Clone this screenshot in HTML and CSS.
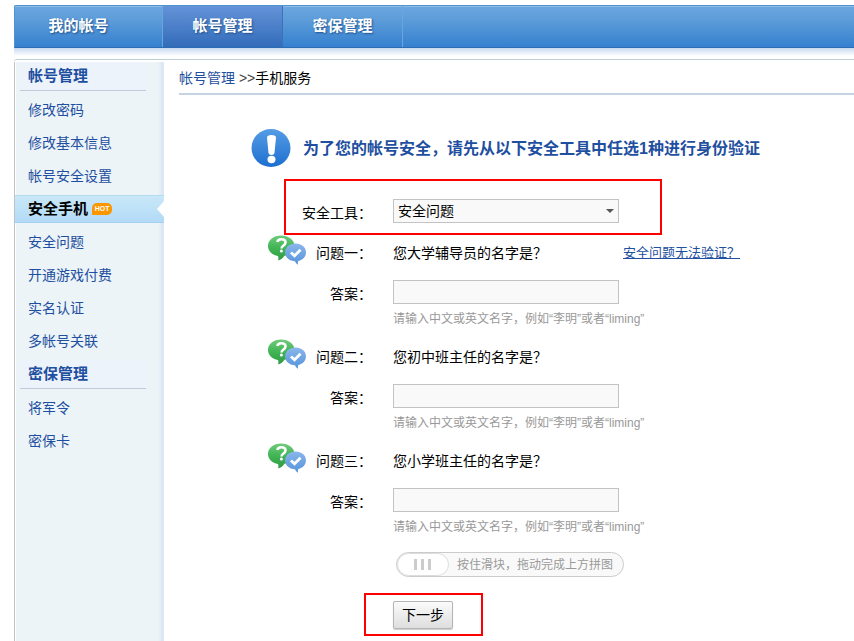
FILE: index.html
```html
<!DOCTYPE html>
<html lang="zh-CN">
<head>
    <meta charset="UTF-8">
    <meta name="viewport" content="width=device-width, initial-scale=1.0">
    <title>手机服务</title>
    <link rel="stylesheet" href="styles.css">
</head>
<body>
    <!-- Icons shared by the form -->
    <svg class="icon-defs" aria-hidden="true">
        <defs>
            <linearGradient id="green" x1="0" y1="0" x2="0" y2="1">
                <stop offset="0" stop-color="#6fcb7c"/>
                <stop offset="0.5" stop-color="#41b455"/>
                <stop offset="1" stop-color="#2f9b45"/>
            </linearGradient>
            <linearGradient id="blue" x1="0" y1="0" x2="0" y2="1">
                <stop offset="0" stop-color="#8ab6ea"/>
                <stop offset="1" stop-color="#5593dc"/>
            </linearGradient>
            <linearGradient id="notice" x1="0" y1="0" x2="0" y2="1">
                <stop offset="0" stop-color="#559ce4"/>
                <stop offset="1" stop-color="#1d6fd0"/>
            </linearGradient>
            <symbol id="icon-question" viewBox="0 0 38 30">
                <path d="M13 .500C5.500.500 0 5 0 11c0 5 4 9 10 10 .6 1.500.6 3 0 4.500 3-.6 5-2.500 6.500-4.700C22 20 26.500 16 26.500 11 26.500 5 20.500.500 13 .500z" fill="url(#green)"/>
                <path d="M9.300 7C9.800 5 11.500 4.300 13.300 4.300c2.700 0 4.200 1.400 4.200 3.300 0 2.900-4 3-4 5.800" fill="none" stroke="#fff" stroke-width="2.600"/>
                <circle cx="13.400" cy="16" r="1.500" fill="#fff"/>
                <path d="M27.500 8.500C21.500 8.500 17 12.300 17 17.300c0 5 4.200 8.700 10 9 .5 1.500 1.400 2.700 3 3.400-.3-1.500-.2-2.700.3-3.800C34.800 25 38 21.800 38 17.300 38 12.300 33.500 8.500 27.500 8.500z" fill="url(#blue)"/>
                <path d="M23 17.500l3.500 3.300 6-6" fill="none" stroke="#fff" stroke-width="2.800"/>
            </symbol>
        </defs>
    </svg>

    <nav class="top-nav">
        <a href="#">我的帐号</a>
        <a href="#" class="current">帐号管理</a>
        <a href="#">密保管理</a>
    </nav>

    <div class="main">
        <aside class="sidebar">
            <h2>帐号管理</h2>
            <ul>
                <li><a href="#">修改密码</a></li>
                <li><a href="#">修改基本信息</a></li>
                <li><a href="#">帐号安全设置</a></li>
                <li class="active">
                    <a href="#">安全手机</a>
                    <span class="hot">HOT</span>
                </li>
                <li><a href="#">安全问题</a></li>
                <li><a href="#">开通游戏付费</a></li>
                <li><a href="#">实名认证</a></li>
                <li><a href="#">多帐号关联</a></li>
            </ul>
            <h2>密保管理</h2>
            <ul>
                <li><a href="#">将军令</a></li>
                <li><a href="#">密保卡</a></li>
            </ul>
        </aside>

        <div class="content">
            <div class="breadcrumb"><a href="#">帐号管理</a> <span>&gt;&gt;</span>手机服务</div>

            <div class="notice">
                <svg width="40" height="40" viewBox="0 0 40 40" aria-hidden="true">
                    <ellipse cx="20" cy="20" rx="19.500" ry="19" fill="url(#notice)"/>
                    <path d="M16 9.500Q16 7 20.500 7t4.500 2.500L23.500 25q-.3 2-3 2t-3-2z" fill="#fff"/>
                    <ellipse cx="20.500" cy="31.500" rx="4" ry="3.700" fill="#fff"/>
                </svg>
                <h1>为了您的帐号安全，请先从以下安全工具中任选1种进行身份验证</h1>
            </div>

            <form>
                <div class="tool-box">
                    <label for="tool">安全工具：</label>
                    <div class="select">
                        <select id="tool" name="tool">
                            <option>安全问题</option>
                        </select>
                    </div>
                </div>

                <div class="question">
                    <div class="ask">
                        <svg class="icon" aria-hidden="true"><use href="#icon-question"/></svg>
                        <span class="name">问题一：</span>
                        <span class="text">您大学辅导员的名字是？</span>
                        <a href="#">安全问题无法验证？</a>
                    </div>
                    <div class="answer">
                        <label for="answer1">答案：</label>
                        <input type="text" id="answer1" name="answer1">
                    </div>
                    <p class="hint">请输入中文或英文名字，例如“李明”或者“liming”</p>
                </div>

                <div class="question">
                    <div class="ask">
                        <svg class="icon" aria-hidden="true"><use href="#icon-question"/></svg>
                        <span class="name">问题二：</span>
                        <span class="text">您初中班主任的名字是？</span>
                    </div>
                    <div class="answer">
                        <label for="answer2">答案：</label>
                        <input type="text" id="answer2" name="answer2">
                    </div>
                    <p class="hint">请输入中文或英文名字，例如“李明”或者“liming”</p>
                </div>

                <div class="question">
                    <div class="ask">
                        <svg class="icon" aria-hidden="true"><use href="#icon-question"/></svg>
                        <span class="name">问题三：</span>
                        <span class="text">您小学班主任的名字是？</span>
                    </div>
                    <div class="answer">
                        <label for="answer3">答案：</label>
                        <input type="text" id="answer3" name="answer3">
                    </div>
                    <p class="hint">请输入中文或英文名字，例如“李明”或者“liming”</p>
                </div>

                <div class="captcha">
                    <input type="range" id="captcha" min="0" max="100" value="0">
                    <label for="captcha">按住滑块，拖动完成上方拼图</label>
                </div>

                <div class="submit-box">
                    <button type="button">下一步</button>
                </div>
            </form>
        </div>
    </div>
</body>
</html>
```

FILE: styles.css
```css
:root {
    --link: #1f4fa0;
    --line: #c5d3e2;
    --field-border: #c3c3c3;
    --field-bg: #f9f9f9;
    --mark: #f00;
}

* {
    box-sizing: border-box;
}

body {
    display: flex;
    flex-direction: column;
    min-height: 100vh;
    margin: 0;
    padding: 5px 0 0 14px;
    font-family: "Liberation Sans", "Noto Sans CJK SC", sans-serif;
    font-size: 14px;
    line-height: 20px;
    color: #000;
    background: #fff;
}

a {
    color: var(--link);
    text-decoration: none;
}

h1, h2, ul, p {
    margin: 0;
    padding: 0;
}

.icon-defs {
    position: absolute;
    width: 0;
    height: 0;
}

/* Top navigation */
.top-nav {
    position: relative;
    display: flex;
    height: 43px;
    border-top: 1px solid #4f94d0;
    border-bottom: 1px solid #2c6cb3;
    border-left: 1px solid #4f94d0;
    border-radius: 2px 0 0 0;
    background: linear-gradient(#6ca6e0, #5c9cd9 35%, #3580cf);
    box-shadow: inset 0 1px #8cbbe6;
}

/* Soft shade under the bar */
.top-nav::after {
    content: "";
    position: absolute;
    top: 42px;
    right: 0;
    left: -1px;
    height: 8px;
    background: linear-gradient(#c8daf0, #fff);
}

.top-nav a {
    width: 120px;
    border-right: 1px solid #6ba5de;
    font-size: 15px;
    font-weight: bold;
    line-height: 39px;
    text-align: center;
    color: #fff;
    text-shadow: 1px 1px 2px #1f4f8c;
}

.top-nav a:first-child {
    width: 148px;
    padding-right: 20px;
}

.top-nav a.current {
    background: linear-gradient(#6493d8, #336cba);
    border-color: #3a73bc;
}

.main {
    display: flex;
    flex: 1;
    margin-top: 11px;
    border-top: 1px solid #bfd0d6;
    border-radius: 3px 0 0 0;
}

/* Sidebar */
.sidebar {
    width: 150px;
    flex-shrink: 0;
    margin-top: 2px;
    border-left: 1px solid #bfc3c7;
    background: linear-gradient(to right, #fff 1px, transparent 1px, transparent 143px, #d7e4f2 148px, #e3edf7), #ecf4f8;
}

.sidebar h2 {
    height: 29px;
    margin: 0 18px 0 5px;
    padding-left: 8px;
    border-bottom: 1px solid #c1cad8;
    background: #ecf3fa;
    font-size: 15px;
    line-height: 28px;
    color: var(--link);
}

.sidebar ul {
    padding: 5px 0;
    list-style: none;
}

.sidebar li {
    display: flex;
    align-items: center;
    height: 28px;
    padding-left: 13px;
}

.sidebar li + li {
    margin-top: 5px;
}

.sidebar .active {
    position: relative;
    border-top: 1px solid #b3dcee;
    border-bottom: 1px solid #a5d0ee;
    background: linear-gradient(#c9e8f8, #b2daf7);
}

.sidebar .active a {
    font-size: 15px;
    font-weight: bold;
    color: #000;
}

/* White notch on the right edge */
.sidebar .active::after {
    content: "";
    position: absolute;
    top: 5px;
    right: 0;
    border: 8px solid transparent;
    border-right: 7px solid #fff;
    border-left: 0;
}

.hot {
    width: 20px;
    height: 12px;
    margin-left: 4px;
    border-radius: 5px 5px 5px 0;
    background: #fb9600;
    font-size: 7px;
    font-weight: bold;
    line-height: 12px;
    text-align: center;
    color: #fff;
}

/* Content */
.content {
    flex: 1;
    padding-left: 15px;
}

.breadcrumb {
    height: 35px;
    border-bottom: 2px solid var(--line);
    line-height: 36px;
}

.breadcrumb span {
    color: #444;
}

.notice {
    display: flex;
    align-items: center;
    gap: 12px;
    margin: 33px 0 11px 72px;
}

.notice h1 {
    padding-top: 2px;
    font-size: 16px;
    line-height: 24px;
    color: var(--link);
}

.tool-box {
    display: flex;
    align-items: center;
    width: 378px;
    height: 56px;
    margin-left: 105px;
    padding-top: 8px;
    border: 2px solid var(--mark);
}

.tool-box label {
    width: 86px;
    margin-right: 21px;
    padding-top: 4px;
    text-align: right;
}

.select {
    position: relative;
    width: 226px;
}

.select::after {
    content: "";
    position: absolute;
    top: 10px;
    right: 5px;
    border: 4px solid transparent;
    border-top-color: #555;
    border-bottom: 0;
    pointer-events: none;
}

select,
input[type="text"] {
    display: block;
    width: 226px;
    height: 24px;
    padding: 0 4px;
    border: 1px solid var(--field-border);
    border-radius: 0;
    background: var(--field-bg);
    font: inherit;
    color: #000;
    appearance: none;
}

.question {
    padding-bottom: 11px;
}

.ask {
    display: flex;
    align-items: center;
    height: 36px;
    padding-left: 89px;
}

.icon {
    width: 38px;
    height: 30px;
    align-self: flex-start;
}

.ask .name {
    width: 66px;
    margin-right: 21px;
    text-align: right;
}

.ask .text {
    width: 230px;
}

.ask a {
    font-size: 13px;
    text-decoration: underline;
}

.answer {
    display: flex;
    align-items: center;
    margin-top: 9px;
}

.answer label {
    width: 193px;
    margin-right: 21px;
    padding-top: 4px;
    text-align: right;
}

.hint {
    margin: 6px 0 0 214px;
    font-size: 12px;
    line-height: 18px;
    color: #999;
}

/* Slide captcha */
.captcha {
    position: relative;
    width: 228px;
    margin: 5px 0 0 217px;
}

.captcha input {
    display: block;
    width: 100%;
    height: 25px;
    margin: 0;
    border: 1px solid #ccc;
    border-radius: 13px;
    background: var(--field-bg);
    appearance: none;
}

.captcha input::-webkit-slider-thumb {
    width: 52px;
    height: 23px;
    border: 1px solid #ddd;
    border-radius: 12px;
    background:
        linear-gradient(#ccc, #ccc) 16px 5px / 3px 11px no-repeat,
        linear-gradient(#ccc, #ccc) 23px 5px / 3px 11px no-repeat,
        linear-gradient(#ccc, #ccc) 30px 5px / 3px 11px no-repeat,
        #fff;
    appearance: none;
}

.captcha label {
    position: absolute;
    top: 4px;
    left: 61px;
    font-size: 12px;
    line-height: 18px;
    white-space: nowrap;
    color: #999;
    pointer-events: none;
}

.submit-box {
    width: 119px;
    height: 43px;
    margin: 16px 0 0 185px;
    padding: 6px 27px;
    border: 2px solid var(--mark);
}

.submit-box button {
    display: block;
    width: 60px;
    height: 28px;
    padding: 0;
    border: 1px solid #b5b5b5;
    border-radius: 2px;
    background: linear-gradient(#fbfbfb, #dedede);
    box-shadow: 0 1px 1px #ccc;
    font: inherit;
    color: #000;
}
```
